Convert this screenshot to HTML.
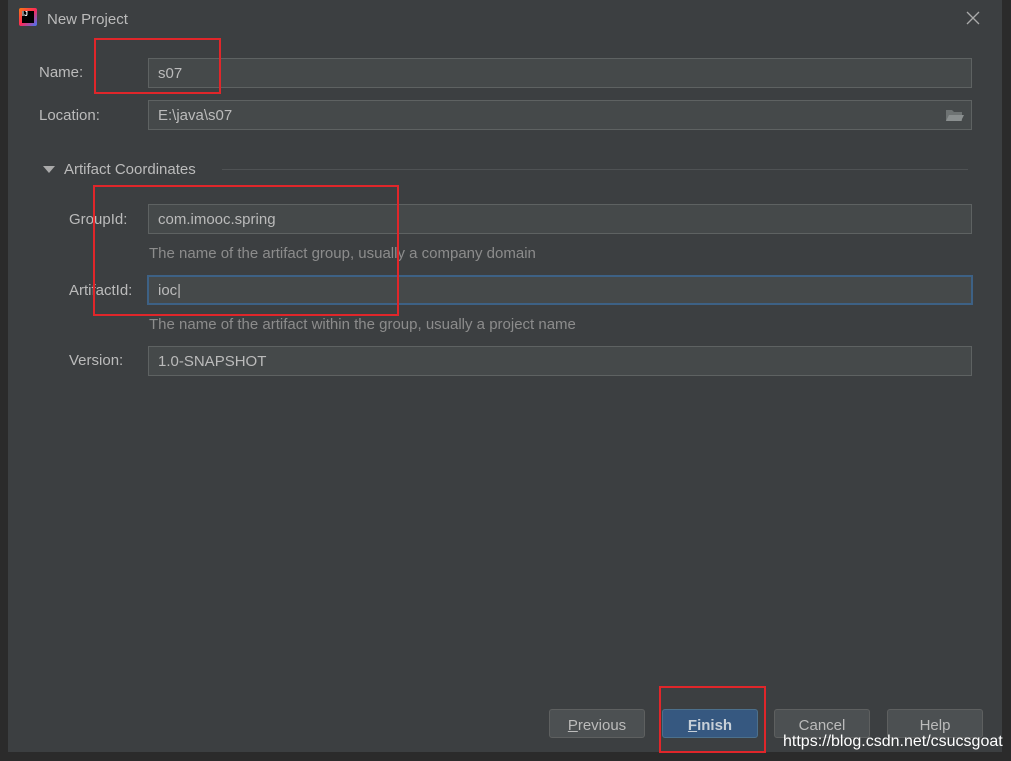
<!DOCTYPE html><html><head><style>
body{margin:0;width:1011px;height:761px;background:#2b2b2b;position:relative;overflow:hidden;font-family:"Liberation Sans",sans-serif;font-size:15px;color:#bbbbbb}
.dlg{position:absolute;left:8px;top:0;width:994px;height:752px;background:#3c3f41}
.a{position:absolute}
.in{position:absolute;left:148px;width:822px;height:28px;background:#45494a;border:1px solid #5e6262;box-sizing:content-box;line-height:30px;text-indent:9px;color:#bbbbbb}
.lbl{position:absolute;line-height:20px}
.hint{position:absolute;left:149px;color:#8c8c8c;font-size:15px}
.btn{position:absolute;top:709px;width:96px;height:29px;border:1px solid #5e6060;border-radius:3px;background:#4c5052;text-align:center;line-height:31px;font-size:15px;color:#bbbbbb;box-sizing:border-box}
.red{position:absolute;border:2px solid #e0262a;box-sizing:border-box}
</style></head><body>
<div class="dlg"></div>
<div class="a" style="left:19px;top:8px;width:18px;height:18px;background:linear-gradient(135deg,#f97a12,#fe2857 50%,#3b78ff);border-radius:2px"></div>
<div class="a" style="left:22px;top:11px;width:12px;height:12px;background:#000;color:#fff;font-size:7px;font-weight:bold;line-height:8px">IJ</div>
<div class="a" style="left:47px;top:11px;font-size:15px;color:#bbbbbb">New Project</div>
<svg class="a" style="left:966px;top:11px" width="14" height="14"><path d="M1 1L13 13M13 1L1 13" stroke="#aaa" stroke-width="1.3"/></svg>
<div class="lbl" style="left:39px;top:63px">Name:</div>
<div class="in" style="top:58px">s07</div>
<div class="lbl" style="left:39px;top:106px">Location:</div>
<div class="in" style="top:100px">E:\java\s07</div>
<svg class="a" style="left:945px;top:107px" width="20" height="16"><path d="M1 3h6l2 2h8v9H1z" fill="#6e7373"/><path d="M4 8h15l-3 6H1z" fill="#8a8f8f"/></svg>
<div class="a" style="left:43px;top:166px;width:0;height:0;border-left:6px solid transparent;border-right:6px solid transparent;border-top:7px solid #aaa"></div>
<div class="lbl" style="left:64px;top:160px">Artifact Coordinates</div>
<div class="a" style="left:222px;top:169px;width:746px;height:1px;background:#4f5254"></div>
<div class="lbl" style="left:69px;top:210px">GroupId:</div>
<div class="in" style="top:204px">com.imooc.spring</div>
<div class="hint" style="top:245px">The name of the artifact group, usually a company domain</div>
<div class="lbl" style="left:69px;top:281px">ArtifactId:</div>
<div class="in" style="top:275px;border:2px solid #3d6185;left:147px;width:822px;height:26px;line-height:28px">ioc|</div>
<div class="hint" style="top:316px">The name of the artifact within the group, usually a project name</div>
<div class="lbl" style="left:69px;top:351px">Version:</div>
<div class="in" style="top:346px">1.0-SNAPSHOT</div>
<div class="btn" style="left:549px"><u>P</u>revious</div>
<div class="btn" style="left:662px;background:#365880;border-color:#4c708c;font-weight:bold;color:#c8d0d8"><u>F</u>inish</div>
<div class="btn" style="left:774px">Cancel</div>
<div class="btn" style="left:887px">Help</div>
<div class="a" style="left:783px;top:733px;font-size:16px;color:#fff">https://blog.csdn.net/csucsgoat</div>
<div class="red" style="left:94px;top:38px;width:127px;height:56px"></div>
<div class="red" style="left:93px;top:185px;width:306px;height:131px"></div>
<div class="red" style="left:659px;top:686px;width:107px;height:67px"></div>
</body></html>
